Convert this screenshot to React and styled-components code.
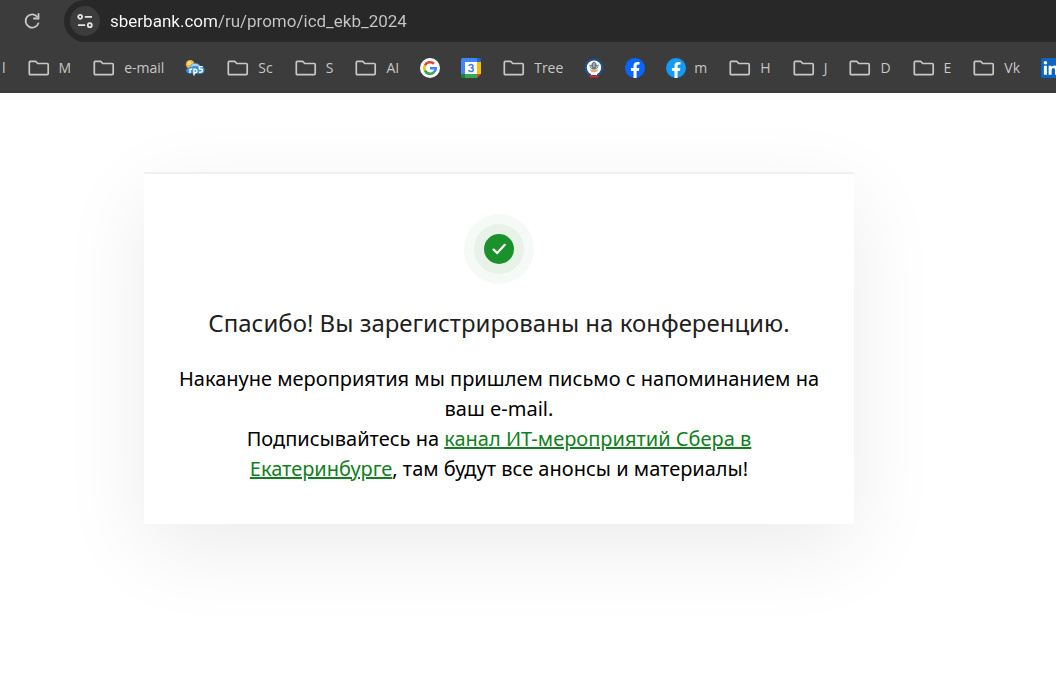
import React from "react";
import styled, { createGlobalStyle } from "styled-components";

const GlobalStyle = createGlobalStyle`
  * { box-sizing: border-box; }
  body {
    margin: 0;
    background: #fff;
    font-family: "Noto Sans", "Open Sans", sans-serif;
  }
`;

const Page = styled.div`
  min-height: 100vh;
  overflow-x: hidden;
`;

const BrowserChrome = styled.header`
  background: #3c3c3c;
`;

const Toolbar = styled.div`
  display: flex;
  align-items: center;
  height: 42px;
  padding-left: 20px;
  gap: 20px;
`;

const IconButton = styled.button`
  display: flex;
  align-items: center;
  justify-content: center;
  flex: none;
  width: ${(p) => p.$size}px;
  height: ${(p) => p.$size}px;
  padding: 0;
  border: 0;
  border-radius: 50%;
  background: ${(p) => (p.$filled ? "#3c3c3c" : "transparent")};
  color: ${(p) => (p.$filled ? "#e3e3e3" : "#c7c7c7")};
`;

const AddressBar = styled.form`
  display: flex;
  align-items: center;
  flex: 1;
  gap: 10px;
  height: 42px;
  padding-left: 6px;
  border-radius: 21px 0 0 21px;
  background: #282828;
`;

const AddressInput = styled.input`
  flex: 1;
  min-width: 0;
  height: 30px;
  padding: 0;
  border: 0;
  outline: 0;
  background: linear-gradient(to right, #ffffff 108px, #c7c7c7 108px);
  background-clip: text;
  color: transparent;
  font: 17px Roboto, sans-serif;
`;

const BookmarksBar = styled.nav`
  display: flex;
  align-items: center;
  gap: 21px;
  height: 51px;
  padding-left: 2px;
  overflow: hidden;
`;

const Bookmark = styled.a`
  display: flex;
  align-items: center;
  flex: none;
  gap: 8px;
  color: #c7c7c7;
  font: 14px/20px "Open Sans", sans-serif;
  text-decoration: none;
  white-space: nowrap;
`;

const Content = styled.main`
  display: flex;
  justify-content: center;
  padding: 79px 58px 80px 0;
`;

const Card = styled.section`
  display: flex;
  flex-direction: column;
  align-items: center;
  width: 100%;
  max-width: 710px;
  padding: 40px 32px;
  border-top: 2px solid #f0f0f0;
  background: #fff;
  box-shadow: 0 24px 80px rgba(0, 0, 0, 0.08);
  text-align: center;
`;

const Title = styled.h1`
  margin: 22px 0 24px;
  color: #1f1f22;
  font-size: 24px;
  font-weight: 400;
  line-height: 34px;
`;

const Message = styled.p`
  margin: 0;
  color: #000;
  font-size: 20px;
  line-height: 30px;
`;

const ChannelLink = styled.a`
  color: #107f1c;
  text-decoration: underline;
`;

const ReloadIcon = () => (
  <svg width="18" height="18" viewBox="0 0 18 18" fill="none" stroke="currentColor" strokeWidth="1.8">
    <path d="M14.6 5.2A6.6 6.6 0 1 0 15.6 10.6" />
    <path d="M15.5 1.2V6.5H10.2" />
  </svg>
);

const TuneIcon = () => (
  <svg width="18" height="18" viewBox="0 0 18 18" fill="none" stroke="currentColor" strokeWidth="1.8">
    <circle cx="4.2" cy="4.8" r="2" />
    <path d="M8.8 4.8H16M2 13.2H9.2" />
    <circle cx="13.8" cy="13.2" r="2" />
  </svg>
);

const FolderIcon = () => (
  <svg width="24" height="20" viewBox="0 0 24 20" fill="none" stroke="#c7c7c7" strokeWidth="1.7" strokeLinejoin="round">
    <path d="M3.3 3.4H8.7L10.8 5.5H20.2Q21.2 5.5 21.2 6.5V15.6Q21.2 16.6 20.2 16.6H3.3Q2.3 16.6 2.3 15.6V4.4Q2.3 3.4 3.3 3.4Z" />
  </svg>
);

const WeatherIcon = () => (
  <svg width="20" height="20" viewBox="0 0 20 20">
    <circle cx="5.2" cy="6.2" r="4.3" fill="#f6b73c" />
    <circle cx="4.4" cy="5.2" r="2" fill="#ffd978" />
    <path d="M4 15.5Q0.8 14.8 1.2 12Q1.7 9.6 4.4 9.5Q5.4 5.6 9.4 5.2Q13.6 4.6 15.4 8.2Q19.4 8.4 19.6 12Q19.4 15.4 16 15.8Z" fill="#3a91d8" />
    <path d="M5 9.2Q6.5 5.8 10 5.8Q13.4 5.6 15 8.6Q10 7.4 5 9.2Z" fill="#a5d5f3" />
    <g fill="none" stroke="#fff" strokeWidth="1.4">
      <path d="M5 15V10.8M5 12.2Q5.5 10.9 7.3 11M9 17.5V11.2H10.4Q12 11.4 12 13Q11.9 14.7 10.3 14.7H9M17.8 8.6H14.4V11H16Q17.6 11.2 17.4 12.8Q17.1 14.5 14 14.2" />
    </g>
  </svg>
);

const GoogleIcon = () => (
  <svg width="20" height="20" viewBox="0 0 20 20">
    <circle cx="10" cy="10" r="10" fill="#fff" />
    <g fill="none" strokeWidth="2.6">
      <path d="M4.8 7.5A5.8 5.8 0 0 1 14 5.8" stroke="#ea4335" />
      <path d="M4.8 12.5A5.8 5.8 0 0 1 4.8 7.5" stroke="#fbbc05" />
      <path d="M13.7 14.5A5.8 5.8 0 0 1 4.8 12.4" stroke="#34a853" />
      <path d="M10 10.2H15.8A5.8 5.8 0 0 1 13.6 14.6" stroke="#4285f4" />
    </g>
  </svg>
);

const CalendarIcon = () => (
  <svg width="20" height="20" viewBox="0 0 20 20">
    <path d="M1.5 0H16V4H4V16H0V1.5Q0 0 1.5 0Z" fill="#4285f4" />
    <path d="M16 0H18.5Q20 0 20 1.5V4H16Z" fill="#1967d2" />
    <path d="M16 4H20V16H16Z" fill="#fbbc04" />
    <path d="M4 16H16V20H4Z" fill="#34a853" />
    <path d="M0 16H4V20H1.5Q0 20 0 18.5Z" fill="#188038" />
    <path d="M16 16H20L16 20Z" fill="#ea4335" />
    <path d="M4 4H16V16H4Z" fill="#fff" />
    <path d="M7.9 8Q8.2 6.4 10 6.4Q12 6.5 12 8.2Q11.9 9.8 9.7 9.8Q12.4 9.8 12.4 11.8Q12.2 13.6 10 13.6Q8 13.6 7.6 11.9" fill="none" stroke="#3f7de8" strokeWidth="1.5" />
  </svg>
);

const CrestIcon = () => (
  <svg width="20" height="20" viewBox="0 0 20 20">
    <circle cx="10" cy="9.6" r="8.3" fill="#fff" stroke="#1d5292" strokeWidth="2.2" />
    <path d="M5.2 6.6L7.2 7.2L8 5L10 3.6L12 5L12.8 7.2L14.8 6.6L13.9 9.8L11.6 11.4H8.4L6.1 9.8Z" fill="#6b7680" />
    <path d="M6.6 7.8L8 10M13.4 7.8L12 10M10 5V9" stroke="#eef0f2" strokeWidth="0.8" />
    <path d="M5.4 10.4L7.8 12H12.2L14.6 10.4L13.2 13.4L10 14.6L6.8 13.4Z" fill="#dcb173" />
    <path d="M7 14.2L10 15.2L13 14.2V17H7Z" fill="#fff" />
    <path d="M5.2 17Q10 18.4 14.8 17L14 19.4H6Z" fill="#cf2638" />
  </svg>
);

const FacebookIcon = ({ color }) => (
  <svg width="20" height="20" viewBox="0 0 24 24">
    <circle cx="12" cy="12" r="12" fill={color} />
    <path d="M16.7 15.5L17.2 12H13.9V9.8C13.9 8.8 14.4 7.9 15.9 7.9H17.4V4.9C17.4 4.9 16.1 4.7 14.8 4.7C12 4.7 10.2 6.3 10.2 9.4V12H7.1V15.5H10.2V23.9A12 12 0 0 0 13.9 23.9V15.5Z" fill="#fff" />
  </svg>
);

const LinkedInIcon = () => (
  <svg width="20" height="20" viewBox="0 0 20 20">
    <rect width="20" height="20" rx="1.5" fill="#0a66c2" />
    <circle cx="4.4" cy="4.8" r="1.8" fill="#fff" />
    <path d="M2.9 7.7H5.9V16.8H2.9ZM7.6 7.7H10.5V9Q11.4 7.5 13.4 7.5Q17 7.6 17 11.6V16.8H14V12.2Q14 10 12.4 10Q10.6 10 10.6 12.2V16.8H7.6Z" fill="#fff" />
  </svg>
);

const SuccessIcon = () => (
  <svg width="70" height="70" viewBox="0 0 70 70" role="img" aria-label="Готово">
    <circle cx="35" cy="35" r="35" fill="#f5faf6" />
    <circle cx="35" cy="35" r="25" fill="#e8f2e9" />
    <circle cx="35" cy="35" r="15" fill="#1a912b" />
    <path d="M29.6 35.6L33.2 39L40.8 30.8" fill="none" stroke="#fff" strokeWidth="2.2" strokeLinecap="round" />
  </svg>
);

const bookmarks = [
  { label: "l" },
  { icon: <FolderIcon />, label: "M" },
  { icon: <FolderIcon />, label: "e-mail" },
  { icon: <WeatherIcon />, name: "rp5" },
  { icon: <FolderIcon />, label: "Sc" },
  { icon: <FolderIcon />, label: "S" },
  { icon: <FolderIcon />, label: "AI" },
  { icon: <GoogleIcon />, name: "Google" },
  { icon: <CalendarIcon />, name: "Calendar" },
  { icon: <FolderIcon />, label: "Tree" },
  { icon: <CrestIcon />, name: "Госуслуги" },
  { icon: <FacebookIcon color="#0866ff" />, name: "Facebook" },
  { icon: <FacebookIcon color="#139af4" />, label: "m" },
  { icon: <FolderIcon />, label: "H" },
  { icon: <FolderIcon />, label: "J" },
  { icon: <FolderIcon />, label: "D" },
  { icon: <FolderIcon />, label: "E" },
  { icon: <FolderIcon />, label: "Vk" },
  { icon: <LinkedInIcon />, name: "LinkedIn" },
];

export default function App() {
  return (
    <Page>
      <GlobalStyle />
      <BrowserChrome>
        <Toolbar>
          <IconButton $size={24} aria-label="Reload">
            <ReloadIcon />
          </IconButton>
          <AddressBar onSubmit={(e) => e.preventDefault()}>
            <IconButton type="button" $size={30} $filled aria-label="Site information">
              <TuneIcon />
            </IconButton>
            <AddressInput aria-label="Address" defaultValue="sberbank.com/ru/promo/icd_ekb_2024" spellCheck={false} />
          </AddressBar>
        </Toolbar>
        <BookmarksBar aria-label="Bookmarks">
          {bookmarks.map((b) => (
            <Bookmark key={b.label || b.name} href="#" aria-label={b.name}>
              {b.icon}
              {b.label && <span>{b.label}</span>}
            </Bookmark>
          ))}
        </BookmarksBar>
      </BrowserChrome>
      <Content>
        <Card>
          <SuccessIcon />
          <Title>Спасибо! Вы зарегистрированы на конференцию.</Title>
          <Message>
            Накануне мероприятия мы пришлем письмо с напоминанием на ваш e-mail.
          </Message>
          <Message>
            Подписывайтесь на <ChannelLink href="#">канал ИТ-мероприятий Сбера в Екатеринбурге</ChannelLink>, там будут все анонсы и материалы!
          </Message>
        </Card>
      </Content>
    </Page>
  );
}
